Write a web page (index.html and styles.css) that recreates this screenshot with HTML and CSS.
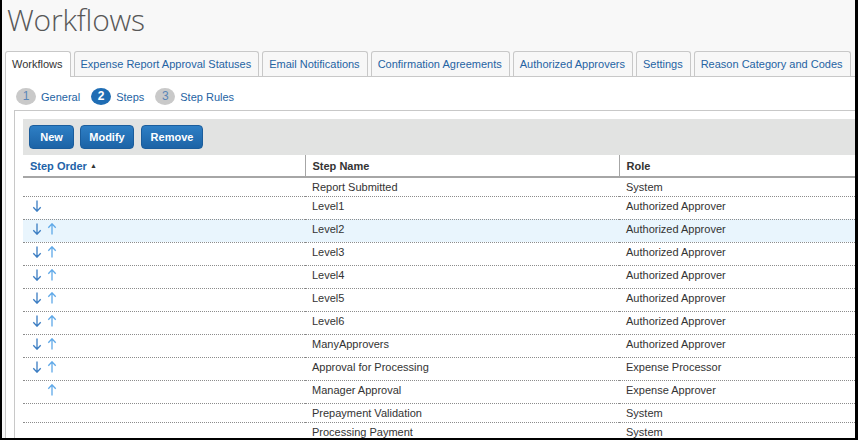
FILE: index.html
```html
<!DOCTYPE html>
<html>
<head>
<meta charset="utf-8">
<link rel="stylesheet" href="styles.css">
</head>
<body>
<div class="frame">
  <div class="page">
    <h1 class="title">Workflows</h1>
    <div class="tabs">
      <div class="tab active">Workflows</div>
      <div class="tab">Expense Report Approval Statuses</div>
      <div class="tab">Email Notifications</div>
      <div class="tab">Confirmation Agreements</div>
      <div class="tab">Authorized Approvers</div>
      <div class="tab">Settings</div>
      <div class="tab">Reason Category and Codes</div>
    </div>
    <div class="panel">
      <div class="steps">
        <div class="step"><span class="num">1</span><span class="label">General</span></div>
        <div class="step current"><span class="num">2</span><span class="label">Steps</span></div>
        <div class="step"><span class="num">3</span><span class="label">Step Rules</span></div>
      </div>
      <div class="box">
        <div class="toolbar">
          <button class="btn btn-new">New</button>
          <button class="btn btn-modify">Modify</button>
          <button class="btn btn-remove">Remove</button>
        </div>
        <table class="grid">
          <colgroup><col class="c1"><col class="c2"><col class="c3"></colgroup>
          <thead>
            <tr><th class="sort">Step Order <span class="tri">▲</span></th><th>Step Name</th><th>Role</th></tr>
          </thead>
          <tbody>
            <tr class="short"><td></td><td>Report Submitted</td><td>System</td></tr>
            <tr class="mv"><td><span class="arrows"><svg class="ar dn" viewBox="0 0 10 12"><path d="M5 0.5V11M1.3 7.2L5 11.2L8.7 7.2"/></svg></span></td><td>Level1</td><td>Authorized Approver</td></tr>
            <tr class="mv hl"><td><span class="arrows"><svg class="ar dn" viewBox="0 0 10 12"><path d="M5 0.5V11M1.3 7.2L5 11.2L8.7 7.2"/></svg><svg class="ar up" viewBox="0 0 10 12"><path d="M5 11.5V1M1.3 4.8L5 0.8L8.7 4.8"/></svg></span></td><td>Level2</td><td>Authorized Approver</td></tr>
            <tr class="mv"><td><span class="arrows"><svg class="ar dn" viewBox="0 0 10 12"><path d="M5 0.5V11M1.3 7.2L5 11.2L8.7 7.2"/></svg><svg class="ar up" viewBox="0 0 10 12"><path d="M5 11.5V1M1.3 4.8L5 0.8L8.7 4.8"/></svg></span></td><td>Level3</td><td>Authorized Approver</td></tr>
            <tr class="mv"><td><span class="arrows"><svg class="ar dn" viewBox="0 0 10 12"><path d="M5 0.5V11M1.3 7.2L5 11.2L8.7 7.2"/></svg><svg class="ar up" viewBox="0 0 10 12"><path d="M5 11.5V1M1.3 4.8L5 0.8L8.7 4.8"/></svg></span></td><td>Level4</td><td>Authorized Approver</td></tr>
            <tr class="mv"><td><span class="arrows"><svg class="ar dn" viewBox="0 0 10 12"><path d="M5 0.5V11M1.3 7.2L5 11.2L8.7 7.2"/></svg><svg class="ar up" viewBox="0 0 10 12"><path d="M5 11.5V1M1.3 4.8L5 0.8L8.7 4.8"/></svg></span></td><td>Level5</td><td>Authorized Approver</td></tr>
            <tr class="mv"><td><span class="arrows"><svg class="ar dn" viewBox="0 0 10 12"><path d="M5 0.5V11M1.3 7.2L5 11.2L8.7 7.2"/></svg><svg class="ar up" viewBox="0 0 10 12"><path d="M5 11.5V1M1.3 4.8L5 0.8L8.7 4.8"/></svg></span></td><td>Level6</td><td>Authorized Approver</td></tr>
            <tr class="mv"><td><span class="arrows"><svg class="ar dn" viewBox="0 0 10 12"><path d="M5 0.5V11M1.3 7.2L5 11.2L8.7 7.2"/></svg><svg class="ar up" viewBox="0 0 10 12"><path d="M5 11.5V1M1.3 4.8L5 0.8L8.7 4.8"/></svg></span></td><td>ManyApprovers</td><td>Authorized Approver</td></tr>
            <tr class="mv"><td><span class="arrows"><svg class="ar dn" viewBox="0 0 10 12"><path d="M5 0.5V11M1.3 7.2L5 11.2L8.7 7.2"/></svg><svg class="ar up" viewBox="0 0 10 12"><path d="M5 11.5V1M1.3 4.8L5 0.8L8.7 4.8"/></svg></span></td><td>Approval for Processing</td><td>Expense Processor</td></tr>
            <tr class="mv"><td><span class="arrows"><span class="ar-gap"></span><svg class="ar up" viewBox="0 0 10 12"><path d="M5 11.5V1M1.3 4.8L5 0.8L8.7 4.8"/></svg></span></td><td>Manager Approval</td><td>Expense Approver</td></tr>
            <tr class="short"><td></td><td>Prepayment Validation</td><td>System</td></tr>
            <tr class="short"><td></td><td>Processing Payment</td><td>System</td></tr>
          </tbody>
        </table>
      </div>
    </div>
  </div>
</div>
</body>
</html>
```

FILE: styles.css
```css
* { box-sizing: border-box; }
html, body { margin: 0; padding: 0; }
body { font-family: "Liberation Sans", Arial, sans-serif; font-size: 11px; color: #333; background: #fff; }

.frame {
  width: 858px;
  height: 440px;
  overflow: hidden;
  background: #f8f8f8;
  border-left: 2px solid #000;
  border-right: 3px solid #000;
  border-bottom: 2px solid #000;
}
.page { width: 900px; padding-left: 3px; }

.title {
  margin: 0;
  height: 50px;
  padding: 1px 0 0 2px;
  font-family: "Open Sans", sans-serif;
  font-weight: 300;
  font-size: 30px;
  line-height: 37px;
  color: #575757;
  letter-spacing: -0.2px;
}

.tabs { display: flex; gap: 3px; height: 26px; position: relative; z-index: 1; padding-top: 1px; }
.tab {
  height: 25px;
  padding: 0 7px 0 6px;
  border: 1px solid #c8c8c8;
  border-bottom: none;
  border-radius: 3px 3px 0 0;
  background: #f7f7f7;
  color: #2563a3;
  line-height: 24px;
  white-space: nowrap;
}
.tab.active { background: #fff; color: #333; height: 26px; }

.panel {
  background: #fff;
  border: 1px solid #c8c8c8;
  padding: 0 0 0 8px;
  height: 400px;
}

.steps { display: flex; align-items: center; gap: 11px; height: 33px; padding: 6px 0 0 2px; }
.step { display: flex; align-items: center; gap: 5px; }
.num {
  width: 20px; height: 17px; border-radius: 50%;
  background: #c9c9c9; color: #5a86b8;
  font-size: 12px; text-align: center; line-height: 17px;
}
.step.current .num { background: #1f6db4; color: #fff; font-weight: bold; }
.label { color: #2563a3; }

.box { border: 1px solid #c8c8c8; padding: 8px 0 0 8px; height: 360px; }

.toolbar { display: flex; gap: 6px; height: 36px; padding: 6px 0 0 6px; background: #e2e3e2; }
.btn {
  height: 24px;
  padding: 0;
  border: 1px solid #1b5d9c;
  border-radius: 4px;
  background: linear-gradient(#2e7fc5, #1c63a6);
  color: #fff;
  font-family: "Liberation Sans", Arial, sans-serif;
  font-size: 11px;
  font-weight: bold;
  text-align: center;
}
.btn-new { width: 45px; }
.btn-modify { width: 54px; }
.btn-remove { width: 62px; margin-left: 1px; }

.grid { border-collapse: collapse; table-layout: fixed; width: 900px; }
.c1 { width: 282px; }
.c2 { width: 314px; }
.grid th {
  height: 22px;
  padding: 0 7px;
  text-align: left;
  font-weight: bold;
  color: #333;
  border-bottom: 2px solid #a6a6a6;
  border-left: 1px solid #a6a6a6;
}
.grid th:first-child { border-left: none; }
.grid th.sort { color: #2262a8; }
.tri { font-size: 7px; color: #333; vertical-align: 2px; }
.grid td {
  height: 23px;
  padding: 0 7px;
  border-bottom: 1px dotted #8c8c8c;
  white-space: nowrap;
}
.grid tr.mv td { padding-bottom: 4px; }
.grid tr.short td { height: 19px; }
.grid tr.hl td { background: #e9f5fd; }
.arrows { display: flex; gap: 5px; padding-left: 2px; align-items: center; }
.ar { width: 10px; height: 12px; display: block; }
.ar path { fill: none; stroke-width: 1.3; }
.ar.dn path { stroke: #3a7cc2; }
.ar.up path { stroke: #5ea8e8; }
.ar-gap { width: 10px; height: 12px; display: block; }
```
